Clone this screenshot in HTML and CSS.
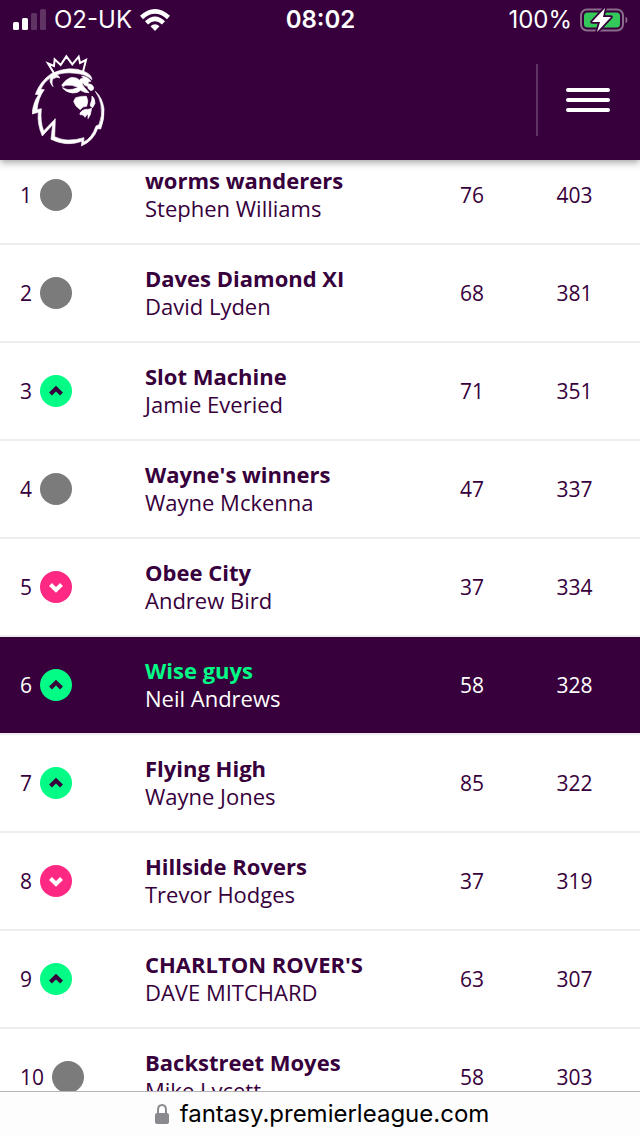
FILE: index.html
```html
<!DOCTYPE html>
<html lang="en">
<head>
<meta charset="utf-8">
<meta name="viewport" content="width=device-width, initial-scale=1">
<title>Fantasy Premier League</title>
<link rel="stylesheet" href="styles.css">
</head>
<body>
<svg class="defs" aria-hidden="true">
  <symbol id="up" viewBox="0 0 32 32"><path d="M10.500 19 16 13.500 21.500 19" fill="none" stroke="currentColor" stroke-width="4"/></symbol>
  <symbol id="down" viewBox="0 0 32 32"><path d="M10.500 13.500 16 19 21.500 13.500" fill="none" stroke="currentColor" stroke-width="4"/></symbol>
</svg>
<header class="top">
  <div class="status">
    <div class="status-left">
      <svg class="signal" viewBox="0 0 33 22" aria-hidden="true" fill="#fff">
        <rect x="0" y="13" width="6" height="8" rx="1.500"/><rect x="9" y="9" width="6" height="12" rx="1.500"/>
        <g opacity=".2"><rect x="18" y="4" width="6" height="17" rx="1.500"/><rect x="27" y="0" width="6" height="21" rx="1.500"/></g>
      </svg>
      <span>O2-UK</span>
      <svg class="wifi" viewBox="0 0 30 22" aria-hidden="true">
        <g fill="none" stroke="#fff" stroke-width="4.500"><path d="M1.500 8.500Q15-3.800 28.500 8.500"/><path d="M6.500 13.800Q15 5.800 23.500 13.800"/></g>
        <path d="M10.500 17.200Q15 13.400 19.500 17.200L15 22Z" fill="#fff"/>
      </svg>
    </div>
    <span class="clock">08:02</span>
    <div class="status-right">
      <span>100%</span>
      <svg class="battery" viewBox="0 0 48 24" aria-hidden="true">
        <rect x="1" y="1.500" width="42" height="21" rx="6" fill="none" stroke="#8b6a8b" stroke-width="2"/>
        <path d="M45.500 8.500v7q2-1 2-3.500t-2-3.500Z" fill="#8b6a8b"/>
        <rect x="4" y="4.500" width="36" height="15" rx="3.500" fill="#34c759"/>
        <path d="M25 0 12 14h8l-3 10L31 9h-8Z" fill="#fff" stroke="#37003c" stroke-width="3.500" paint-order="stroke" stroke-linejoin="round"/>
      </svg>
    </div>
  </div>
  <div class="nav">
    <a class="logo" href="#" aria-label="Premier League">
      <svg viewBox="36 24 219 282" aria-hidden="true">
        <g fill="none" stroke="#fff" stroke-width="6" stroke-linejoin="miter">
          <path d="M102 85 84 55l18 8 2-20 18 17 17-26 18 24 19-23 4 19 18-9-9 35"/>
        </g>
        <g fill="#fff" stroke="#fff" stroke-width="2">
          <path d="M94 86Q150 60 194 80Q215 89 216 104Q198 88 168 85Q128 80 105 92Q91 106 99 125Q85 109 93 96Q70 113 62 133L73 134Q55 157 51 194L64 191Q60 231 71 258L106 221L104 275Q140 294 192 278L191 291Q216 279 228 243L237 239Q249 211 243 180Q239 157 226 139Q247 158 252 191Q254 222 242 252L233 251Q220 288 184 303L186 289Q140 306 93 283L98 239L67 273Q51 237 55 202L36 207Q40 170 56 149L46 148Q60 109 94 86Z"/>
          <path d="M104 90Q116 88 119 99Q109 93 101 101Z"/>
          <path d="M125 121Q135 105 151 98Q169 95 179 106Q182 97 192 101L185 93Q205 95 213 109Q203 108 204 116Q217 116 221 127Q222 136 213 137Q202 132 203 124Q190 122 190 112Q183 117 194 128Q200 134 207 143Q196 145 181 136Q174 145 157 144Q136 141 127 128Q143 137 158 133Q168 130 175 127Q154 118 136 121L130 125Z"/>
          <path d="M167 158Q187 152 199 154Q207 167 200 184Q188 183 181 194Q166 186 161 169Z"/>
          <path d="M216 153Q225 160 225 175L218 188Q208 184 211 178Q217 165 216 153Z"/>
          <path d="M180 204Q187 194 199 193Q206 194 215 190L211 209L204 221L204 207Q198 211 195 217Q191 207 180 209Z"/>
        </g>
      </svg>
    </a>
    <button class="menu" type="button" aria-label="Menu"><span></span><span></span><span></span></button>
  </div>
</header>
<main class="content">
  <table class="league">
    <colgroup><col class="c-rank"><col class="c-team"><col class="c-gw"><col class="c-total"></colgroup>
    <tbody>
      <tr><td><div class="rank">1<i class="move"></i></div></td><td><strong>worms wanderers</strong>Stephen Williams</td><td>76</td><td>403</td></tr>
      <tr><td><div class="rank">2<i class="move"></i></div></td><td><strong>Daves Diamond XI</strong>David Lyden</td><td>68</td><td>381</td></tr>
      <tr><td><div class="rank">3<svg class="move up"><use href="#up"/></svg></div></td><td><strong>Slot Machine</strong>Jamie Everied</td><td>71</td><td>351</td></tr>
      <tr><td><div class="rank">4<i class="move"></i></div></td><td><strong>Wayne's winners</strong>Wayne Mckenna</td><td>47</td><td>337</td></tr>
      <tr><td><div class="rank">5<svg class="move down"><use href="#down"/></svg></div></td><td><strong>Obee City</strong>Andrew Bird</td><td>37</td><td>334</td></tr>
      <tr class="mine"><td><div class="rank">6<svg class="move up"><use href="#up"/></svg></div></td><td><strong>Wise guys</strong>Neil Andrews</td><td>58</td><td>328</td></tr>
      <tr><td><div class="rank">7<svg class="move up"><use href="#up"/></svg></div></td><td><strong>Flying High</strong>Wayne Jones</td><td>85</td><td>322</td></tr>
      <tr><td><div class="rank">8<svg class="move down"><use href="#down"/></svg></div></td><td><strong>Hillside Rovers</strong>Trevor Hodges</td><td>37</td><td>319</td></tr>
      <tr><td><div class="rank">9<svg class="move up"><use href="#up"/></svg></div></td><td><strong>CHARLTON ROVER'S</strong>DAVE MITCHARD</td><td>63</td><td>307</td></tr>
      <tr><td><div class="rank">10<i class="move"></i></div></td><td><strong>Backstreet Moyes</strong>Mike Lycett</td><td>58</td><td>303</td></tr>
    </tbody>
  </table>
</main>
<footer class="address">
  <svg viewBox="0 0 14 20" aria-hidden="true"><rect y="9" width="14" height="11" rx="2" fill="#8a8a8e"/><path d="M3 10V6q0-5 4-5t4 5v4" fill="none" stroke="#8a8a8e" stroke-width="2"/></svg>
  <span>fantasy.premierleague.com</span>
</footer>
</body>
</html>
```
FILE: styles.css
```css
* { box-sizing: border-box; }
body {
  margin: 0;
  height: 100vh;
  display: flex;
  flex-direction: column;
  overflow: hidden;
  background: #fff;
  color: #37003c;
  font: 22px/28px "Open Sans", Lato, sans-serif;
}
.defs { display: none; }
.top {
  position: relative;
  z-index: 1;
  flex: none;
  background: #37003c;
  color: #fff;
  box-shadow: 0 2px 8px rgba(0, 0, 0, .4);
}
.status {
  display: grid;
  grid-template-columns: 1fr auto 1fr;
  align-items: center;
  height: 40px;
  padding: 0 12px 0 13px;
  font: 24px/40px Inter, sans-serif;
}
.status-left, .status-right { display: flex; align-items: center; gap: 8px; }
.status-right { justify-content: flex-end; }
.clock { font-weight: 600; }
.signal { width: 33px; height: 22px; }
.wifi { width: 30px; height: 22px; }
.battery { width: 48px; height: 24px; }
.nav {
  display: flex;
  align-items: center;
  justify-content: space-between;
  height: 120px;
  padding: 0 0 0 32px;
}
.logo svg { display: block; width: 73px; height: 94px; }
.menu {
  display: flex;
  flex-direction: column;
  align-items: center;
  justify-content: center;
  gap: 6px;
  width: 104px;
  height: 72px;
  padding: 0 2px 0 0;
  border: 0;
  border-left: 2px solid #5f3363;
  background: none;
}
.menu span { width: 44px; height: 4px; border-radius: 2px; background: #fff; }
.content { flex: 1; min-height: 0; overflow: hidden; }
/* The list is scrolled slightly beneath the header. */
.league {
  width: 100%;
  margin-top: -13px;
  border-spacing: 0;
  table-layout: fixed;
}
.c-rank { width: 145px; }
.c-gw { width: 102px; }
.c-total { width: 117px; }
.league td {
  height: 98px;
  padding: 0;
  border-bottom: 2px solid #ededef;
  vertical-align: middle;
}
.league td:nth-child(2) { padding-bottom: 2px; }
.league td:nth-child(n+3) { font-size: 21px; text-align: center; }
.league td:last-child { padding-right: 14px; }
.league strong { display: block; font-weight: 700; }
.rank { display: flex; align-items: center; gap: 8px; padding-left: 20px; font-size: 21px; }
.move { width: 32px; height: 32px; border-radius: 50%; background: #7b7b7b; }
.up { background: #02fc86; color: #37003c; }
.down { background: #ff2882; color: #fff; }
.mine td { background: #37003c; background-clip: padding-box; color: #fff; }
.mine strong { color: #02fc86; }
.address {
  flex: none;
  display: flex;
  align-items: center;
  justify-content: center;
  gap: 11px;
  height: 45px;
  padding-left: 4px;
  border-top: 1px solid #b5b5b7;
  background: #fdfdfd;
  color: #000;
  font: 24px/44px Inter, sans-serif;
}
.address svg { width: 14px; height: 20px; }
```
